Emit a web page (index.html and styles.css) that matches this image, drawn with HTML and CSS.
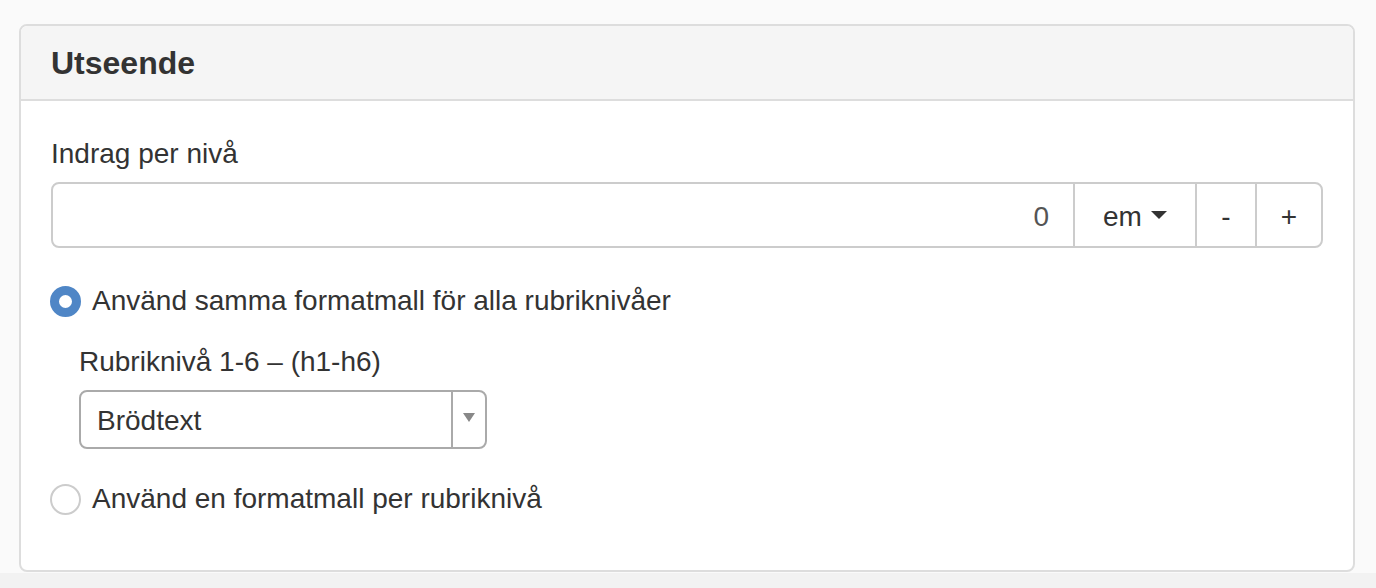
FILE: index.html
```html
<!DOCTYPE html>
<html lang="sv">
<head>
  <meta charset="UTF-8" />
  <title>Utseende</title>
  <link rel="stylesheet" href="styles.css">
</head>
<body>

<div class="panel">
  <div class="panel-heading">
    <h3 class="panel-title">Utseende</h3>
  </div>
  <div class="panel-body">
    <label class="field-label">Indrag per nivå</label>
    <div class="input-group">
      <input type="text" class="num-input" value="0" />
      <button class="btn btn-unit">em <span class="caret"></span></button>
      <button class="btn btn-minus">-</button>
      <button class="btn btn-plus">+</button>
    </div>

    <div class="radio-line">
      <span class="radio checked"></span>
      <span>Använd samma formatmall för alla rubriknivåer</span>
    </div>

    <div class="sub-group">
      <div class="sub-label">Rubriknivå 1-6 – (h1-h6)</div>
      <div class="select-box">
        <span class="select-value">Brödtext</span>
        <span class="select-arrow"><span class="tri"></span></span>
      </div>
    </div>

    <div class="radio-line last">
      <span class="radio"></span>
      <span>Använd en formatmall per rubriknivå</span>
    </div>
  </div>
</div>

<div class="bottom-strip"></div>

</body>
</html>
```

FILE: styles.css
```css
body { margin: 0; background: #fafafa; font-family: "Liberation Sans", Arial, sans-serif; color: #333; }

.panel { margin: 24px 21px 0 19px; height: 548px; box-sizing: border-box; background: #fff; border: 2px solid #ddd; border-radius: 8px; overflow: hidden; }
.panel-heading { background: #f5f5f5; border-bottom: 2px solid #ddd; height: 73px; padding: 0 30px; }
.panel-title { margin: 0; font-size: 32px; line-height: 75px; font-weight: bold; color: #333; }
.panel-body { padding: 33px 30px 0 30px; }

.field-label { display: block; font-size: 28px; line-height: 40px; margin-bottom: 8px; }

.input-group { display: flex; height: 66px; }
.num-input { flex: 1; min-width: 0; box-sizing: border-box; height: 66px; border: 2px solid #ccc; border-radius: 8px 0 0 8px; padding: 3px 24px 0 24px; text-align: right; font-family: inherit; font-size: 28px; color: #555; outline: none; }
.btn { box-sizing: border-box; height: 66px; margin-left: -2px; background: #fff; border: 2px solid #ccc; font-family: inherit; font-size: 28px; color: #333; padding: 3px 0 0 0; display: flex; align-items: center; justify-content: center; }
.btn-unit { width: 124px; }
.btn-minus { width: 62px; }
.btn-plus { width: 68px; border-radius: 0 8px 8px 0; }
.caret { display: inline-block; margin-left: 9px; margin-top: -3px; border-top: 8px solid #333; border-left: 8px solid transparent; border-right: 8px solid transparent; }

.radio-line { display: flex; align-items: center; gap: 11px; margin-top: 33px; margin-left: -1px; font-size: 28px; line-height: 40px; }
.radio-line.last { margin-top: 30px; }
.radio { box-sizing: border-box; width: 31px; height: 31px; border-radius: 50%; border: 2px solid #ccc; background: #fff; flex-shrink: 0; }
.radio.checked { border: 9px solid #4f86c6; }

.sub-group { margin-left: 28px; margin-top: 21px; }
.sub-label { font-size: 28px; line-height: 40px; margin-bottom: 8px; }
.select-box { box-sizing: border-box; width: 408px; height: 59px; border: 2px solid #aaa; border-radius: 8px; display: flex; align-items: center; }
.select-value { flex: 1; padding: 3px 0 0 16px; font-size: 28px; color: #333; }
.select-arrow { width: 32px; height: 100%; border-left: 2px solid #aaa; display: flex; align-items: center; justify-content: center; }
.tri { border-top: 9px solid #888; border-left: 6px solid transparent; border-right: 6px solid transparent; margin-top: -4px; }

.bottom-strip { margin-top: 1px; height: 20px; background: #f2f2f2; }
```
